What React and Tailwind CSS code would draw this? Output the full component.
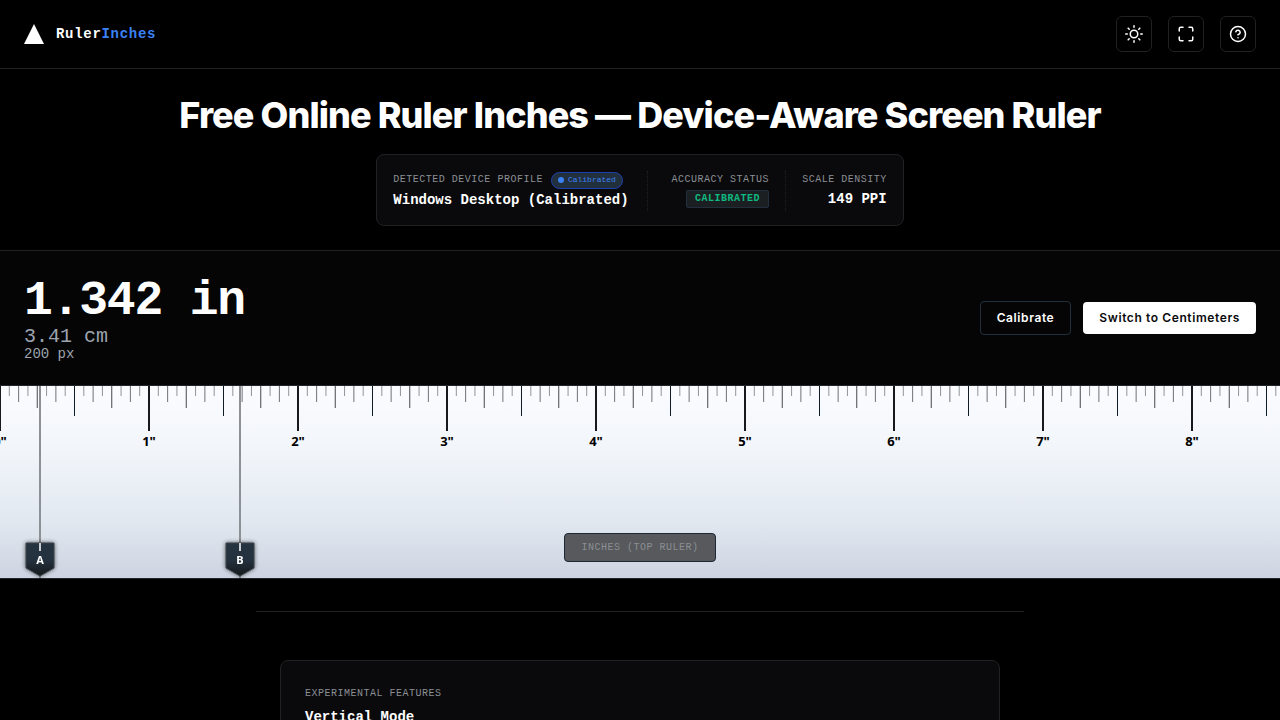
import { FiHelpCircle, FiMaximize, FiSun } from 'react-icons/fi'
import clsx from 'clsx'

const PPI = 149
const RULER_INCHES = 20

const TOOLS = [
  { icon: FiSun, label: 'Toggle theme' },
  { icon: FiMaximize, label: 'Fullscreen' },
  { icon: FiHelpCircle, label: 'Help' },
]

// tick length and colour by sixteenth of an inch
function tickStyle(i) {
  if (i % 16 === 0) return { length: 45, width: 2, color: '#17191c' }
  if (i % 8 === 0) return { length: 30, width: 1, color: '#0f1b26' }
  if (i % 4 === 0) return { length: 22, width: 1, color: '#45484c' }
  if (i % 2 === 0) return { length: 16, width: 1, color: '#6d7277' }
  return { length: 10, width: 1, color: '#8f959c' }
}

const TICKS = Array.from({ length: RULER_INCHES * 16 }, (_, i) => ({
  x: (i * PPI) / 16,
  ...tickStyle(i),
}))

function Label({ children }) {
  return (
    <span className="block text-[10px] leading-[18px] tracking-wider uppercase text-[#8b8f95] whitespace-nowrap">
      {children}
    </span>
  )
}

function Scale() {
  return (
    <svg className="block w-full h-16" role="img" aria-label="Inch scale">
      {TICKS.map((t) => (
        <rect
          key={t.x}
          x={t.width === 2 ? t.x - 1 : t.x - 0.5}
          y="0"
          width={t.width}
          height={t.length}
          fill={t.color}
        />
      ))}
      {Array.from({ length: RULER_INCHES }, (_, n) => (
        <text key={n} x={n * PPI} y="60" textAnchor="middle" className="font-['Noto_Sans',sans-serif] text-[13px] font-bold fill-black">
          {n}"
        </text>
      ))}
    </svg>
  )
}

function Marker({ name, className }) {
  return (
    <div className={clsx('absolute inset-y-0 w-10 -ml-5 flex flex-col items-center', className)}>
      <div className="absolute inset-y-0 w-0.5 bg-[#8d9095]" />
      <svg
        className="absolute bottom-0 w-10 h-10 overflow-visible drop-shadow-[0_0_2px_rgba(0,0,0,0.6)]"
        viewBox="0 0 40 40"
        role="img"
        aria-label={`Marker ${name}`}
      >
        <defs>
          <linearGradient id={`marker-${name}`} x1="0" y1="0" x2="0" y2="1">
            <stop offset="0" stopColor="#263442" />
            <stop offset="0.5" stopColor="#243240" />
            <stop offset="1" stopColor="#17191b" />
          </linearGradient>
        </defs>
        <path d="M6 5h28v25l-14 8-14-8z" fill={`url(#marker-${name})`} stroke="#3d444b" />
        <path d="M19 5h2v8h-2z" fill="#c9cdd2" />
        <text x="20" y="26" textAnchor="middle" className="font-['Noto_Sans',sans-serif] text-[11px] font-bold fill-white">
          {name}
        </text>
      </svg>
    </div>
  )
}

export default function App() {
  return (
    <div className="min-h-screen bg-black text-white font-['Liberation_Mono',monospace]">
      <header className="flex items-center justify-between px-6 py-4 border-b border-[#1f2123]">
        <a href="#" className="flex items-center gap-3">
          <svg className="w-5 h-5" viewBox="0 0 20 20" aria-hidden="true">
            <path d="M10 0l10 20H0z" fill="#fff" />
          </svg>
          <span className="text-sm font-bold tracking-wider">
            Ruler<span className="text-[#3b82f6]">Inches</span>
          </span>
        </a>
        <div className="flex gap-4">
          {TOOLS.map((tool) => (
            <button
              key={tool.label}
              aria-label={tool.label}
              className="w-9 h-9 flex items-center justify-center rounded-md border border-[#1f2123]"
            >
              <tool.icon size={18} aria-hidden="true" />
            </button>
          ))}
        </div>
      </header>

      {/* Title and device profile */}
      <section className="flex flex-col items-center gap-4 px-6 py-6 border-b border-[#1f2123]">
        <h1 className="text-center text-4xl leading-[45px] font-extrabold tracking-tight font-['Inter',sans-serif]">
          Free Online Ruler Inches — Device-Aware Screen Ruler
        </h1>
        <div className="flex items-stretch px-4 pt-4 pb-3.5 rounded-lg border border-[#1f2123] bg-[#0a0a0c]">
          <div className="pr-[18px]">
            <div className="flex items-center gap-2 h-[18px]">
              <Label>Detected Device Profile</Label>
              <span className="flex items-center gap-1 h-[17px] px-1.5 rounded-full border border-[#1e40af] bg-[#22303d] text-[8px] text-[#3b82f6]">
                <span className="w-1.5 h-1.5 rounded-full bg-[#3b82f6]" />
                Calibrated
              </span>
            </div>
            <p className="text-sm leading-[22px] font-bold">Windows Desktop (Calibrated)</p>
          </div>
          <div className="flex flex-col items-end pl-6 pr-4 border-l border-dotted border-[#1f2123]">
            <Label>Accuracy Status</Label>
            <span className="mt-px px-2 rounded-xs border border-[#22303d] bg-[#1b1f21] text-[10px] leading-4 font-bold tracking-wider text-[#10b981]">
              CALIBRATED
            </span>
          </div>
          <div className="flex flex-col items-end pl-4 border-l border-dotted border-[#1f2123]">
            <Label>Scale Density</Label>
            <p className="text-sm leading-5 font-bold">149 PPI</p>
          </div>
        </div>
      </section>

      {/* Readout */}
      <section className="flex items-center justify-between px-6 py-[23px] bg-[#050505]">
        <div className="text-[#9ca3af]">
          <p className="text-5xl leading-[54px] font-bold tracking-tight text-white">1.342 in</p>
          <p className="text-xl leading-[18px]">3.41 cm</p>
          <p className="text-sm leading-4">200 px</p>
        </div>
        <div className="flex items-center gap-3 font-['Inter',sans-serif] text-xs font-semibold tracking-wider">
          <button className="px-4 py-2 rounded-sm border border-[#22303d]">Calibrate</button>
          <button className="px-4 py-2 rounded-sm bg-white text-[#0a0a0c]">Switch to Centimeters</button>
        </div>
      </section>

      {/* Ruler */}
      <section className="relative h-[194px] overflow-hidden border-y border-[#22262a] bg-[linear-gradient(to_bottom,#fbfcff,#f1f5fa_35%,#e2e8f0_70%,#cdd4e1)]">
        <Scale />
        <Marker name="A" className="left-10" />
        <Marker name="B" className="left-60" />
        <div className="absolute bottom-4 inset-x-0 flex justify-center">
          <span className="px-4 py-[5px] rounded-sm border border-[#1c2833] bg-[#57595c] text-[10px] leading-[17px] tracking-wider text-[#8b8f95]">
            INCHES (TOP RULER)
          </span>
        </div>
      </section>

      <section className="max-w-3xl mx-auto mt-8 px-6 pt-12 border-t border-[#1f2123]">
        <div className="p-6 rounded-lg border border-[#1f2123] bg-[#0a0a0c]">
          <Label>Experimental Features</Label>
          <h2 className="mt-1 text-sm leading-5 font-bold">Vertical Mode</h2>
        </div>
      </section>
    </div>
  )
}
